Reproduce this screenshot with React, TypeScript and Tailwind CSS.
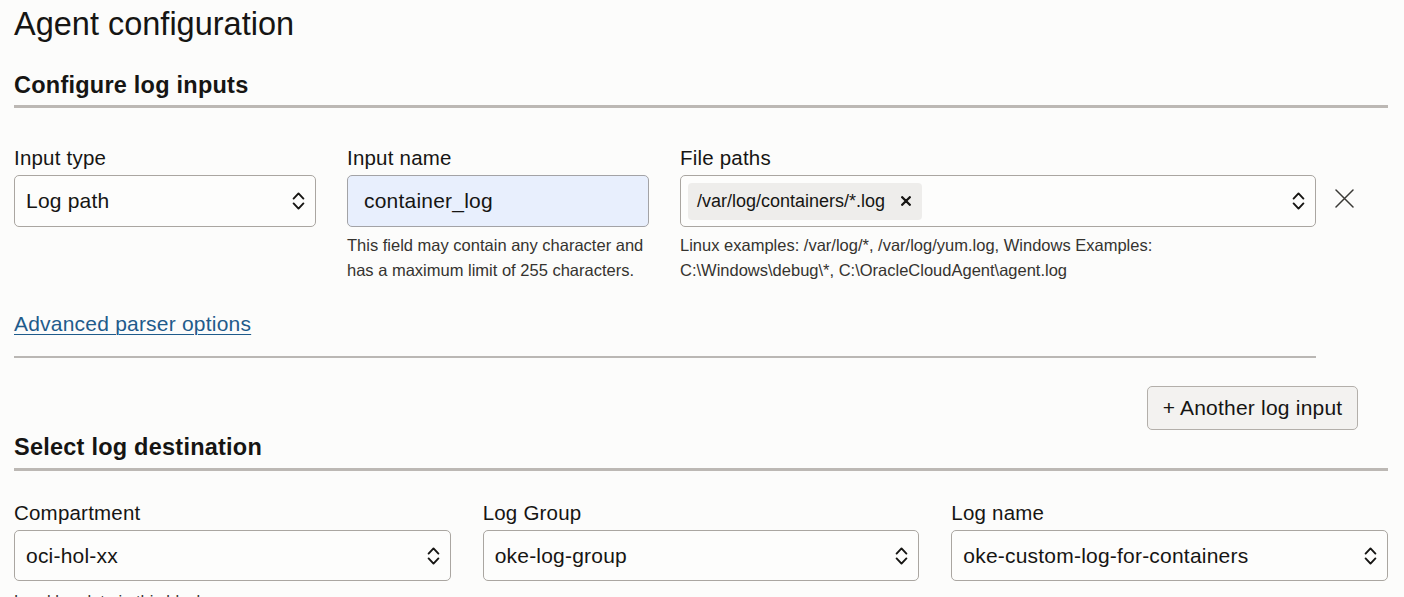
import React from "react";

const Chevrons = () => (
  <svg width="13" height="20" viewBox="0 0 13 20" fill="none" className="shrink-0">
    <path d="M1.6 7.6 L6.5 2.4 L11.4 7.6" stroke="#161513" strokeWidth="1.9" strokeLinecap="round" strokeLinejoin="round" />
    <path d="M1.6 12.4 L6.5 17.6 L11.4 12.4" stroke="#161513" strokeWidth="1.9" strokeLinecap="round" strokeLinejoin="round" />
  </svg>
);

const Label = ({ children }: { children: React.ReactNode }) => (
  <div className="text-[20.5px] leading-[24px] tracking-[0.01em] text-[#161513]">{children}</div>
);

const Select = ({ value, h = "h-[52px]" }: { value: string; h?: string }) => (
  <div className={`mt-[5px] ${h} flex items-center justify-between rounded-[5px] border border-[#aaa6a1] bg-[#fdfdfc] pl-[11px] pr-[10px]`}>
    <span className="text-[21px] leading-[24px] tracking-[0.01em] text-[#161513]">{value}</span>
    <Chevrons />
  </div>
);

export default function App() {
  return (
    <div
      className="w-[1404px] h-[597px] overflow-hidden bg-[#fcfcfb] pl-[14px] pr-[16px] text-[#161513]"
      style={{ fontFamily: '"Liberation Sans", Arial, Helvetica, sans-serif' }}
    >
      <h1 className="pt-[5px] text-[32.5px] leading-[38px] font-normal">Agent configuration</h1>

      <h2 className="mt-[28px] border-b-[3px] border-[#bcb8b4] pb-[6px] text-[23.5px] leading-[28px] tracking-[0.01em] font-bold">
        Configure log inputs
      </h2>

      <div className="mt-[38px] flex">
        <div className="grid w-[1302px] grid-cols-[302px_302px_1fr] gap-x-[31px]">
          <div>
            <Label>Input type</Label>
            <Select value="Log path" />
          </div>
          <div>
            <Label>Input name</Label>
            <div className="mt-[5px] flex h-[52px] items-center rounded-[5px] border border-[#a3a3a6] bg-[#e8effd] pl-[16px]">
              <span className="text-[21px] leading-[24px] tracking-[0.01em]">container_log</span>
            </div>
            <div className="mt-[6px] text-[16.5px] leading-[25px] text-[#35332f]">
              This field may contain any character and
              <br />
              has a maximum limit of 255 characters.
            </div>
          </div>
          <div>
            <Label>File paths</Label>
            <div className="mt-[5px] flex h-[52px] items-center justify-between rounded-[5px] border border-[#aaa6a1] bg-[#fdfdfc] pl-[7px] pr-[10px]">
              <div className="flex h-[37px] items-center gap-[16px] rounded-[4px] bg-[#eeedeb] pl-[9px] pr-[11px]">
                <span className="text-[18px] leading-[22px]">/var/log/containers/*.log</span>
                <svg width="10" height="10" viewBox="0 0 10 10" fill="none">
                  <path d="M1.2 1.2 L8.8 8.8 M8.8 1.2 L1.2 8.8" stroke="#161513" strokeWidth="2.3" strokeLinecap="round" />
                </svg>
              </div>
              <Chevrons />
            </div>
            <div className="mt-[6px] text-[16.5px] leading-[25px] text-[#35332f]">
              Linux examples: /var/log/*, /var/log/yum.log, Windows Examples:
              <br />
              C:\Windows\debug\*, C:\OracleCloudAgent\agent.log
            </div>
          </div>
        </div>
        <div className="ml-[19px] mt-[43px]">
          <svg width="19" height="19" viewBox="0 0 19 19" fill="none">
            <path d="M1 1 L18 18 M18 1 L1 18" stroke="#3a3936" strokeWidth="1.5" strokeLinecap="round" />
          </svg>
        </div>
      </div>

      <div className="mt-[28px] text-[21px] leading-[26px] tracking-[0.01em]">
        <a href="#" className="text-[#1f5b8b] underline decoration-1 underline-offset-[3px]">
          Advanced parser options
        </a>
      </div>

      <div className="mt-[19px] w-[1302px] border-t-2 border-[#bab7b4]" />

      <div className="mt-[28px] flex justify-end pr-[30px]">
        <button className="flex h-[44px] w-[211px] items-center justify-center rounded-[5px] border border-[#b3afaa] bg-[#f3f2f0] text-[21px] leading-[24px] tracking-[0.01em] text-[#161513]">
          + Another log input
        </button>
      </div>

      <h2 className="mt-[3px] border-b-[3px] border-[#bcb8b4] pb-[7px] text-[23.5px] leading-[28px] tracking-[0.01em] font-bold">
        Select log destination
      </h2>

      <div className="mt-[30px] grid grid-cols-3 gap-x-[32px]">
        <div>
          <Label>Compartment</Label>
          <Select value="oci-hol-xx" h="h-[51px]" />
          <div className="mt-[8px] text-[16.5px] leading-[25px] text-[#35332f]">
            Load log data in this block
          </div>
        </div>
        <div>
          <Label>Log Group</Label>
          <Select value="oke-log-group" h="h-[51px]" />
        </div>
        <div>
          <Label>Log name</Label>
          <Select value="oke-custom-log-for-containers" h="h-[51px]" />
        </div>
      </div>
    </div>
  );
}
